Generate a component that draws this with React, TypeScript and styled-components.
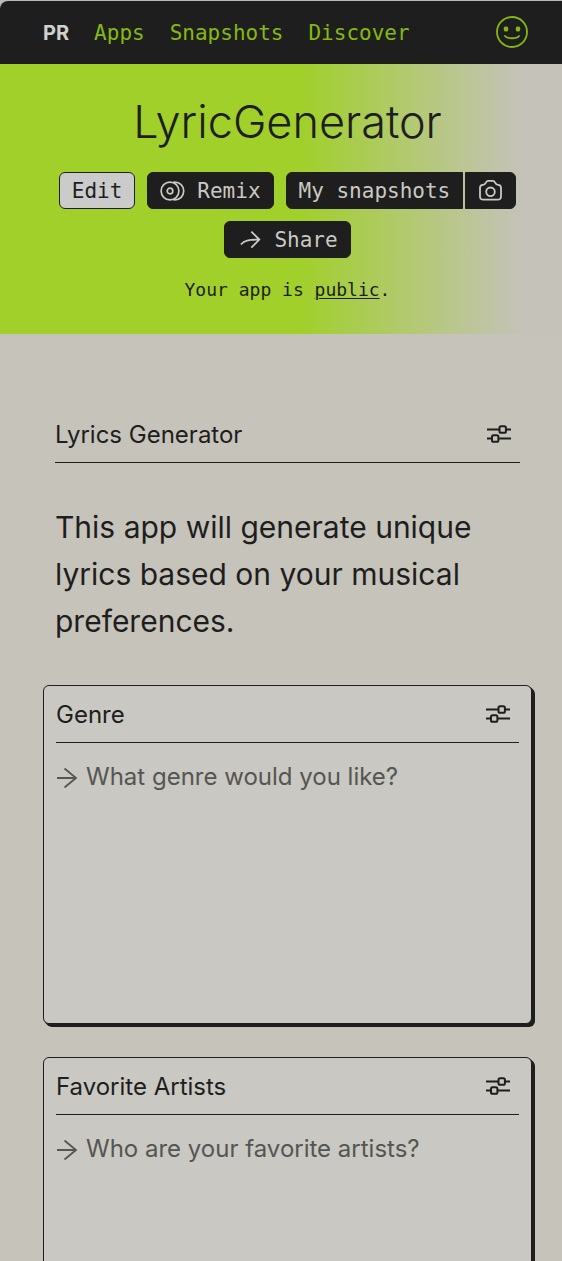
import React from "react";
import styled, { createGlobalStyle, css } from "styled-components";

const ink = "#1e1e1e";
const lime = "#a0d029";
const stone = "#c6c3ba";
const panel = "#c9c8c2";
const sans = `Inter, "Liberation Sans", sans-serif`;
const mono = `"DejaVu Sans Mono", "Liberation Mono", monospace`;

const GlobalStyle = createGlobalStyle`
  *, *::before, *::after { box-sizing: border-box; }
  html { scrollbar-width: none; }
  body {
    margin: 0;
    background: ${stone};
    color: ${ink};
    font-family: ${sans};
  }
`;

const Page = styled.div`
  min-height: 100vh;
`;

const TopEdge = styled.div`
  padding-top: 1px;
  background: #b9bcb9;
`;

const TopBar = styled.header`
  display: flex;
  align-items: center;
  justify-content: space-between;
  height: 63px;
  padding: 0 34px 0 43px;
  background: ${ink};
  border-top-left-radius: 8px;
`;

const Nav = styled.nav`
  display: flex;
  align-items: center;
  gap: 25px;
`;

const Brand = styled.a`
  color: #d0d0ce;
  font: 700 20px/24px ${sans};
  text-decoration: none;
`;

const NavLink = styled.a`
  color: #86b90f;
  font: 21px/24px ${mono};
  text-decoration: none;
`;

const IconButton = styled.button`
  display: flex;
  padding: 0;
  border: 0;
  background: none;
  color: inherit;
`;

const ProfileButton = styled(IconButton)`
  padding-bottom: 2px;
  color: #86b90f;
`;

const Hero = styled.section`
  display: flex;
  flex-direction: column;
  align-items: center;
  padding: 26px 30px 32px 43px;
  background: linear-gradient(90deg, ${lime} 53%, #c5c2ba 93%);
`;

const Title = styled.h1`
  margin: 0 0 18px;
  font-size: 45px;
  font-weight: 300;
  line-height: 64px;
`;

const Actions = styled.div`
  display: flex;
  flex-wrap: wrap;
  justify-content: center;
  gap: 12px;
`;

const Split = styled.div`
  display: flex;
  gap: 2px;
`;

const ActionButton = styled.button<{ $light?: boolean; $join?: "left" | "right" }>`
  display: flex;
  align-items: center;
  gap: 12px;
  height: 37px;
  padding: 0 12px;
  border: 1px solid ${ink};
  border-radius: 6px;
  background: ${(p) => (p.$light ? "#cbcbcb" : ink)};
  color: ${(p) => (p.$light ? ink : "#cbc9c3")};
  font: 21px/24px ${mono};
  ${(p) =>
    p.$join === "left" &&
    css`
      border-top-right-radius: 0;
      border-bottom-right-radius: 0;
    `}
  ${(p) =>
    p.$join === "right" &&
    css`
      border-top-left-radius: 0;
      border-bottom-left-radius: 0;
    `}
`;

const Visibility = styled.p`
  margin: 20px 0 0;
  font: 18px/24px ${mono};

  a {
    color: inherit;
    text-decoration-thickness: 1px;
    text-underline-offset: 2px;
  }
`;

const Main = styled.main`
  display: flex;
  flex-direction: column;
  padding: 71px 30px 30px 43px;
`;

const Intro = styled.section`
  padding: 0 12px;
`;

const BlockHeader = styled.div<{ $inset?: boolean }>`
  display: flex;
  align-items: center;
  justify-content: space-between;
  height: ${(p) => (p.$inset ? 57 : 58)}px;
  padding-right: 8px;
  border-bottom: 1px solid ${ink};
`;

const Heading = styled.h2`
  margin: 0;
  padding-top: 2px;
  font-size: 24px;
  font-weight: 400;
  line-height: 36px;
`;

const Description = styled.p`
  margin: 41px 0 40px;
  font-size: 30px;
  line-height: 47px;
`;

const Cards = styled.div`
  display: flex;
  flex-direction: column;
  gap: 33px;
`;

const Card = styled.section`
  padding: 0 12px 12px;
  border: 1px solid ${ink};
  border-radius: 6px;
  background: ${panel};
  box-shadow: 1px 1px 0 ${ink}, 2px 2px 0 ${ink}, 3px 3px 0 ${ink};
`;

const Field = styled.label`
  display: flex;
  align-items: flex-start;
  gap: 8px;
  padding-top: 16px;
  color: #555553;

  svg {
    flex: none;
    margin-top: 8px;
  }
`;

const TextArea = styled.textarea`
  flex: 1;
  min-width: 0;
  height: 252px;
  padding: 0;
  border: 0;
  outline: 0;
  resize: none;
  background: none;
  color: ${ink};
  font: 24px/36px ${sans};

  &::placeholder {
    color: #555553;
    opacity: 1;
  }
`;

const Smiley = () => (
  <svg width="32" height="32" viewBox="0 0 32 32" fill="none" stroke="currentColor" strokeWidth="1.8" strokeLinecap="round">
    <circle cx="16" cy="16" r="15" />
    <path d="M9 20c2.200 3 11.800 3 14 0" />
    <rect x="7.800" y="10.600" width="4.400" height="4.800" rx="1.600" fill="currentColor" stroke="none" />
    <rect x="19.800" y="10.600" width="4.400" height="4.800" rx="1.600" fill="currentColor" stroke="none" />
  </svg>
);

const RemixIcon = () => (
  <svg width="25" height="20" viewBox="0 0 25 20" fill="none" stroke="currentColor" strokeWidth="1.700">
    <circle cx="10" cy="10" r="8.900" />
    <circle cx="10" cy="10" r="2.800" />
    <path d="M13.500 1.100h1.200c5.200 0 9 4 9 8.900s-3.800 8.900-9 8.900h-1.200" />
  </svg>
);

const CameraIcon = () => (
  <svg width="25" height="24" viewBox="0 0 25 24" fill="none" stroke="currentColor" strokeWidth="1.800" strokeLinejoin="round">
    <path d="M2 9c0-2 1-3.200 3-3.200 2 0 2.200-.8 2.900-2.200.6-1.200 1.100-1.700 2.400-1.700h4.400c1.300 0 1.800.5 2.400 1.700.7 1.400.9 2.200 2.900 2.200s3 1.200 3 3.200v8.200c0 2.500-1 3.500-3.500 3.500h-14C3 20.700 2 19.700 2 17.200z" />
    <circle cx="12.500" cy="12.800" r="4.300" />
  </svg>
);

const ShareIcon = () => (
  <svg width="25" height="20" viewBox="0 0 25 20" fill="none" stroke="currentColor" strokeWidth="1.800">
    <path d="M3.800 14.500C7.500 10.500 11 9.600 22 9.600M14.300 1.600l8 8-8 8" />
  </svg>
);

const SlidersIcon = () => (
  <svg width="26" height="22" viewBox="0 0 26 22" fill="none" stroke="currentColor" strokeWidth="2">
    <path d="M1 6.500h12M20 6.500h5M1 15.500h5M12.500 15.500h12.500" />
    <rect x="13.500" y="3.200" width="6.400" height="6.600" rx="1.600" />
    <rect x="6" y="12.200" width="6.400" height="6.600" rx="1.600" />
  </svg>
);

const ArrowIcon = () => (
  <svg width="22" height="22" viewBox="0 0 22 22" fill="none" stroke="currentColor" strokeWidth="1.800">
    <path d="M1 11h19M8.500 1.500L20 11 8.500 20.500" />
  </svg>
);

const BlockTitle = ({ title, inset }: { title: string; inset?: boolean }) => (
  <BlockHeader $inset={inset}>
    <Heading>{title}</Heading>
    <IconButton type="button" aria-label={`${title} settings`}>
      <SlidersIcon />
    </IconButton>
  </BlockHeader>
);

const questions = [
  { title: "Genre", prompt: "What genre would you like?" },
  { title: "Favorite Artists", prompt: "Who are your favorite artists?" },
];

export default function App() {
  return (
    <Page>
      <GlobalStyle />
      <TopEdge>
        <TopBar>
          <Nav>
            <Brand href="#home">PR</Brand>
            <NavLink href="#apps">Apps</NavLink>
            <NavLink href="#snapshots">Snapshots</NavLink>
            <NavLink href="#discover">Discover</NavLink>
          </Nav>
          <ProfileButton type="button" aria-label="Profile">
            <Smiley />
          </ProfileButton>
        </TopBar>
      </TopEdge>
      <Hero>
        <Title>LyricGenerator</Title>
        <Actions>
          <ActionButton type="button" $light>Edit</ActionButton>
          <ActionButton type="button"><RemixIcon />Remix</ActionButton>
          <Split>
            <ActionButton type="button" $join="left">My snapshots</ActionButton>
            <ActionButton type="button" $join="right" aria-label="Take a snapshot"><CameraIcon /></ActionButton>
          </Split>
          <ActionButton type="button"><ShareIcon />Share</ActionButton>
        </Actions>
        <Visibility>
          Your app is <a href="#visibility">public</a>.
        </Visibility>
      </Hero>
      <Main>
        <Intro>
          <BlockTitle title="Lyrics Generator" />
          <Description>
            This app will generate unique lyrics based on your musical preferences.
          </Description>
        </Intro>
        <Cards>
          {questions.map((q) => (
            <Card key={q.title}>
              <BlockTitle title={q.title} inset />
              <Field>
                <ArrowIcon />
                <TextArea placeholder={q.prompt} aria-label={q.title} />
              </Field>
            </Card>
          ))}
        </Cards>
      </Main>
    </Page>
  );
}
